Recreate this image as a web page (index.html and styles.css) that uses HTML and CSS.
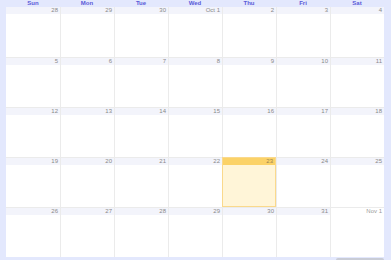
FILE: index.html
```html
<!DOCTYPE html>
<html>
<head>
<meta charset="utf-8">
<link rel="stylesheet" href="styles.css">
</head>
<body>
<div class="frame">
  <div class="head">
    <div>Sun</div><div>Mon</div><div>Tue</div><div>Wed</div><div>Thu</div><div>Fri</div><div>Sat</div>
  </div>
  <div class="grid">
    <div class="cell"><div class="num">28</div></div>
    <div class="cell"><div class="num">29</div></div>
    <div class="cell"><div class="num">30</div></div>
    <div class="cell"><div class="num">Oct 1</div></div>
    <div class="cell"><div class="num">2</div></div>
    <div class="cell"><div class="num">3</div></div>
    <div class="cell"><div class="num">4</div></div>

    <div class="cell"><div class="num">5</div></div>
    <div class="cell"><div class="num">6</div></div>
    <div class="cell"><div class="num">7</div></div>
    <div class="cell"><div class="num">8</div></div>
    <div class="cell"><div class="num">9</div></div>
    <div class="cell"><div class="num">10</div></div>
    <div class="cell"><div class="num">11</div></div>

    <div class="cell"><div class="num">12</div></div>
    <div class="cell"><div class="num">13</div></div>
    <div class="cell"><div class="num">14</div></div>
    <div class="cell"><div class="num">15</div></div>
    <div class="cell"><div class="num">16</div></div>
    <div class="cell"><div class="num">17</div></div>
    <div class="cell"><div class="num">18</div></div>

    <div class="cell"><div class="num">19</div></div>
    <div class="cell"><div class="num">20</div></div>
    <div class="cell"><div class="num">21</div></div>
    <div class="cell"><div class="num">22</div></div>
    <div class="cell today"><div class="num">23</div></div>
    <div class="cell"><div class="num">24</div></div>
    <div class="cell"><div class="num">25</div></div>

    <div class="cell"><div class="num">26</div></div>
    <div class="cell"><div class="num">27</div></div>
    <div class="cell"><div class="num">28</div></div>
    <div class="cell"><div class="num">29</div></div>
    <div class="cell"><div class="num">30</div></div>
    <div class="cell"><div class="num">31</div></div>
    <div class="cell other"><div class="num">Nov 1</div></div>
  </div>
  <div class="foot"><div class="scroll"></div></div>
</div>
</body>
</html>
```
FILE: styles.css
```css
html, body {
  margin: 0;
  padding: 0;
  background: #e3e8fd;
  font-family: "Liberation Sans", Arial, sans-serif;
}
.frame {
  width: 391px;
  height: 260px;
  padding-left: 6px;
  box-sizing: border-box;
  display: flex;
  flex-direction: column;
}
.head {
  display: grid;
  grid-template-columns: repeat(7, 54px);
  height: 7px;
  font-size: 6px;
  line-height: 7px;
  font-weight: bold;
  color: #5a5ad8;
  text-align: center;
}
.grid {
  display: grid;
  grid-template-columns: repeat(7, 54px);
  grid-template-rows: repeat(5, 50px);
  width: 378px;
  background: #fff;
  height: 249px;
}
.cell {
  border-left: 1px solid #ebebeb;
  border-top: 1px solid #ebebeb;
  background: #fff;
  box-sizing: border-box;
}
.cell:nth-child(7n+1) { border-left: none; }
.cell:nth-child(-n+7) { border-top: none; }
.num {
  height: 7px;
  background: #f3f4fb;
  color: #8a8a8a;
  font-size: 6px;
  line-height: 7px;
  text-align: right;
  padding-right: 2px;
}
.today {
  background: #fff5d8;
  border: 1px solid #fad98c;
}
.today .num {
  background: #fbd268;
  color: #9a8450;
}
.other .num {
  background: #fff;
  color: #9a9a9a;
}
.foot {
  flex: 1;
  display: flex;
  justify-content: flex-end;
  align-items: flex-end;
  padding-right: 7px;
}
.scroll {
  width: 48px;
  height: 2px;
  background: #c9ccd6;
  border-radius: 2px 2px 0 0;
}
```
